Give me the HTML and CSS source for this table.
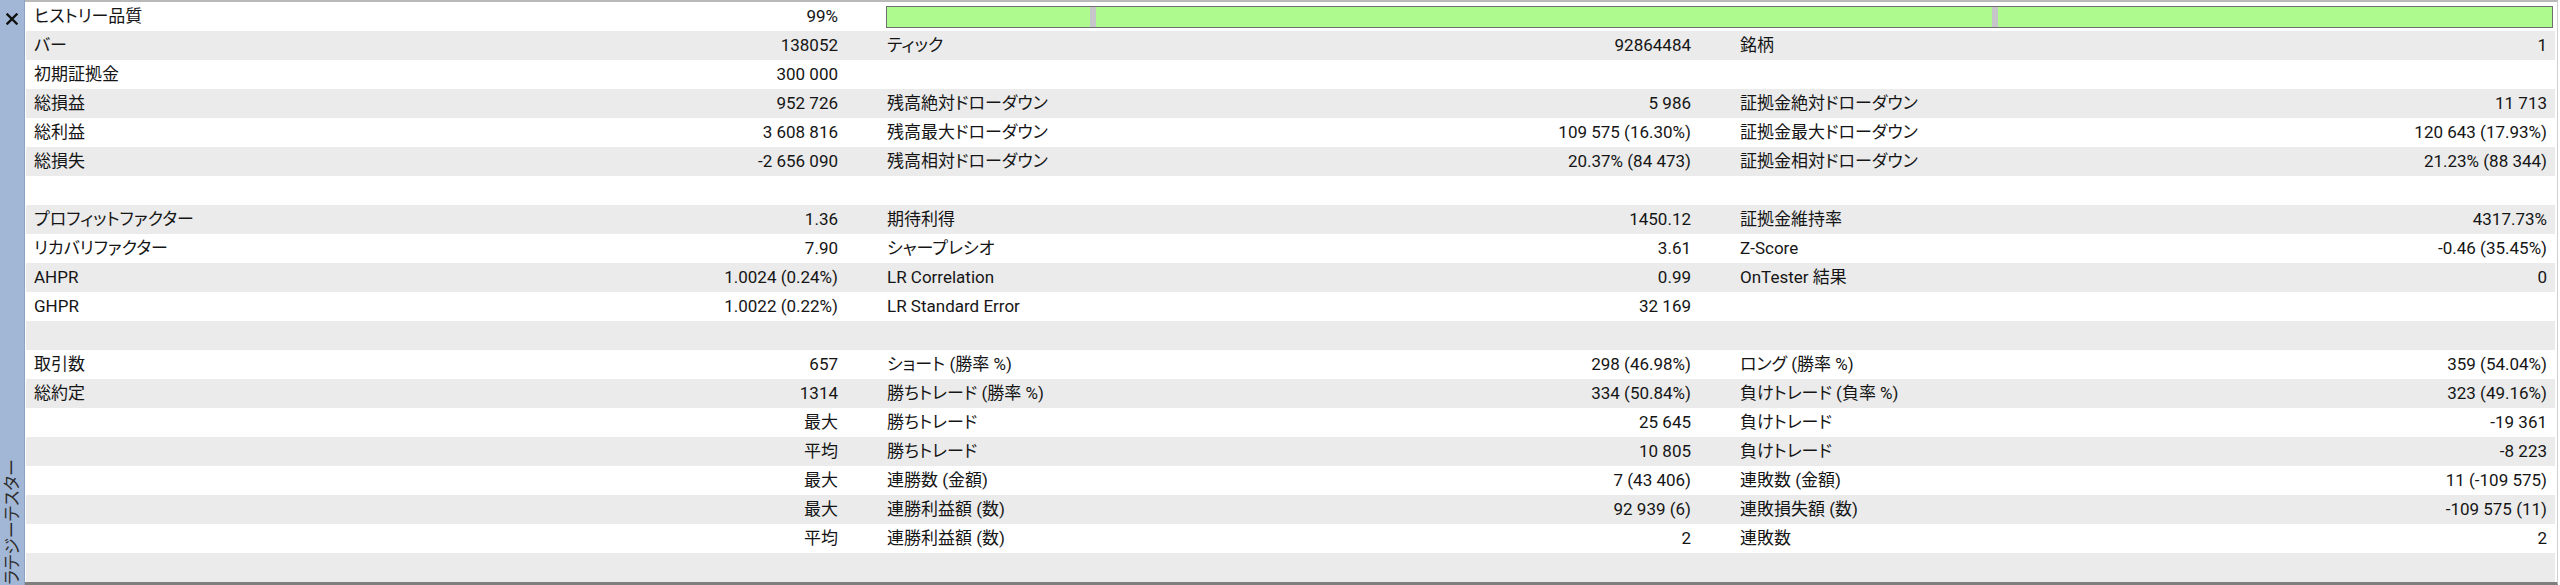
FILE: index.html
```html
<!DOCTYPE html>
<html lang="ja">
<head>
<meta charset="utf-8">
<title>ストラテジーテスター</title>
<link rel="stylesheet" href="styles.css">
</head>
<body>
<div class="app">
  <aside class="side">
    <svg class="close" width="12" height="12" viewBox="0 0 12 12"><path d="M1.5 1.5 L10.5 10.5 M10.5 1.5 L1.5 10.5" stroke="#111" stroke-width="2.4" stroke-linecap="square" fill="none"/></svg>
    <div class="side-label">ストラテジーテスター</div>
  </aside>
  <main class="main">
    <div class="row">
      <div class="cell"><span>ヒストリー品質</span><span>99%</span></div>
      <div class="bar"><span class="seg s1"></span><span class="sep"></span><span class="seg s2"></span><span class="sep"></span><span class="seg s3"></span></div>
    </div>
    <div class="row">
      <div class="cell"><span>バー</span><span>138052</span></div>
      <div class="cell"><span>ティック</span><span>92864484</span></div>
      <div class="cell"><span>銘柄</span><span>1</span></div>
    </div>
    <div class="row">
      <div class="cell"><span>初期証拠金</span><span>300 000</span></div>
      <div class="cell"></div>
      <div class="cell"></div>
    </div>
    <div class="row">
      <div class="cell"><span>総損益</span><span>952 726</span></div>
      <div class="cell"><span>残高絶対ドローダウン</span><span>5 986</span></div>
      <div class="cell"><span>証拠金絶対ドローダウン</span><span>11 713</span></div>
    </div>
    <div class="row">
      <div class="cell"><span>総利益</span><span>3 608 816</span></div>
      <div class="cell"><span>残高最大ドローダウン</span><span>109 575 (16.30%)</span></div>
      <div class="cell"><span>証拠金最大ドローダウン</span><span>120 643 (17.93%)</span></div>
    </div>
    <div class="row">
      <div class="cell"><span>総損失</span><span>-2 656 090</span></div>
      <div class="cell"><span>残高相対ドローダウン</span><span>20.37% (84 473)</span></div>
      <div class="cell"><span>証拠金相対ドローダウン</span><span>21.23% (88 344)</span></div>
    </div>
    <div class="row"></div>
    <div class="row">
      <div class="cell"><span>プロフィットファクター</span><span>1.36</span></div>
      <div class="cell"><span>期待利得</span><span>1450.12</span></div>
      <div class="cell"><span>証拠金維持率</span><span>4317.73%</span></div>
    </div>
    <div class="row">
      <div class="cell"><span>リカバリファクター</span><span>7.90</span></div>
      <div class="cell"><span>シャープレシオ</span><span>3.61</span></div>
      <div class="cell"><span>Z-Score</span><span>-0.46 (35.45%)</span></div>
    </div>
    <div class="row">
      <div class="cell"><span>AHPR</span><span>1.0024 (0.24%)</span></div>
      <div class="cell"><span>LR Correlation</span><span>0.99</span></div>
      <div class="cell"><span>OnTester 結果</span><span>0</span></div>
    </div>
    <div class="row">
      <div class="cell"><span>GHPR</span><span>1.0022 (0.22%)</span></div>
      <div class="cell"><span>LR Standard Error</span><span>32 169</span></div>
      <div class="cell"></div>
    </div>
    <div class="row"></div>
    <div class="row">
      <div class="cell"><span>取引数</span><span>657</span></div>
      <div class="cell"><span>ショート (勝率 %)</span><span>298 (46.98%)</span></div>
      <div class="cell"><span>ロング (勝率 %)</span><span>359 (54.04%)</span></div>
    </div>
    <div class="row">
      <div class="cell"><span>総約定</span><span>1314</span></div>
      <div class="cell"><span>勝ちトレード (勝率 %)</span><span>334 (50.84%)</span></div>
      <div class="cell"><span>負けトレード (負率 %)</span><span>323 (49.16%)</span></div>
    </div>
    <div class="row">
      <div class="cell"><span></span><span>最大</span></div>
      <div class="cell"><span>勝ちトレード</span><span>25 645</span></div>
      <div class="cell"><span>負けトレード</span><span>-19 361</span></div>
    </div>
    <div class="row">
      <div class="cell"><span></span><span>平均</span></div>
      <div class="cell"><span>勝ちトレード</span><span>10 805</span></div>
      <div class="cell"><span>負けトレード</span><span>-8 223</span></div>
    </div>
    <div class="row">
      <div class="cell"><span></span><span>最大</span></div>
      <div class="cell"><span>連勝数 (金額)</span><span>7 (43 406)</span></div>
      <div class="cell"><span>連敗数 (金額)</span><span>11 (-109 575)</span></div>
    </div>
    <div class="row">
      <div class="cell"><span></span><span>最大</span></div>
      <div class="cell"><span>連勝利益額 (数)</span><span>92 939 (6)</span></div>
      <div class="cell"><span>連敗損失額 (数)</span><span>-109 575 (11)</span></div>
    </div>
    <div class="row">
      <div class="cell"><span></span><span>平均</span></div>
      <div class="cell"><span>連勝利益額 (数)</span><span>2</span></div>
      <div class="cell"><span>連敗数</span><span>2</span></div>
    </div>
    <div class="row"></div>
  </main>
</div>
</body>
</html>
```

FILE: styles.css
```css
html, body {
  margin: 0;
  padding: 0;
}
body {
  width: 2560px;
  height: 585px;
  overflow: hidden;
  background: #ffffff;
  font-family: Roboto, "Noto Sans CJK JP", sans-serif;
  font-size: 17px;
  color: #151515;
  font-feature-settings: "palt";
}
.app {
  display: flex;
  height: 585px;
}
.side {
  width: 24px;
  flex: none;
  background: #a2b6d5;
  border-right: 1px solid #8ea3c4;
  display: flex;
  flex-direction: column;
  align-items: center;
  overflow: hidden;
}
.close {
  margin-top: 13px;
  flex: none;
}
.side-label {
  margin-top: auto;
  margin-bottom: -28px;
  writing-mode: vertical-rl;
  text-orientation: sideways;
  transform: rotate(180deg);
  white-space: nowrap;
  font-size: 17px;
  line-height: 22px;
  color: #2c2c2c;
}
.main {
  flex: 1;
  min-width: 0;
  padding-left: 1px;
  padding-right: 2px;
  margin-right: 2px;
  border-top: 2px solid #b9b9b9;
  border-bottom: 3px solid #7e7e7e;
  border-right: 1px solid #d0d0d0;
  display: flex;
  flex-direction: column;
  overflow: hidden;
}
.row {
  flex: none;
  height: 29px;
  display: grid;
  grid-template-columns: 853px 853px 1fr;
  align-items: center;
  padding-left: 8px;
  background: #ffffff;
}
.row:nth-child(even) {
  background: #ebebeb;
}
.cell {
  display: flex;
  justify-content: space-between;
  padding-right: 49px;
  white-space: nowrap;
  line-height: 29px;
  height: 29px;
}
.cell:nth-child(3) {
  padding-right: 8px;
}
.bar {
  grid-column: 2 / 4;
  margin-left: -1px;
  margin-right: 2px;
  height: 22px;
  box-sizing: border-box;
  border: 1px solid #6e6e6e;
  display: flex;
  background: #aefa8e;
}
.seg {
  background: #aefa8e;
}
.s1 { width: 203px; }
.s2 { width: 896px; }
.s3 { flex: 1; }
.sep {
  width: 6px;
  background: #c6c6ca;
}
```
